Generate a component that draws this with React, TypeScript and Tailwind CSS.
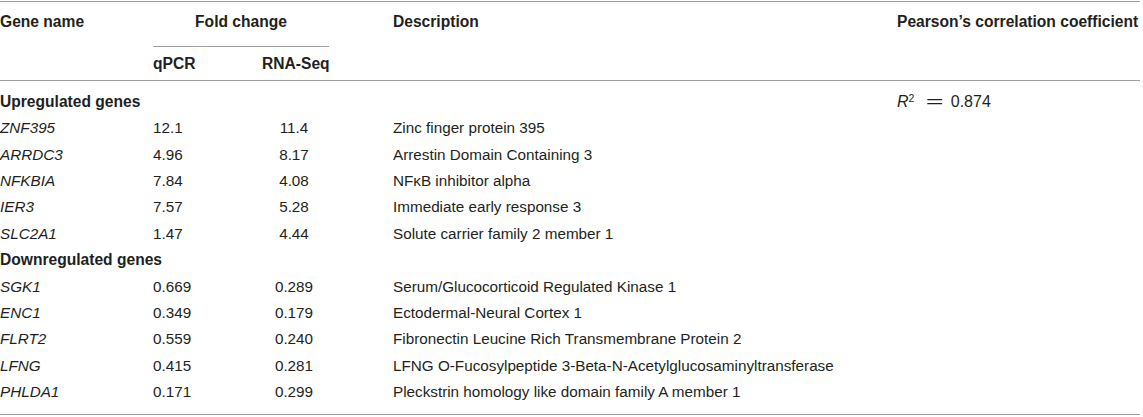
const cols = "grid grid-cols-[152px_109px_132px_504px_243px]";

type Row = { gene: string; qpcr: string; rna: string; desc: string };

const upregulated: Row[] = [
  { gene: "ZNF395", qpcr: "12.1", rna: "11.4", desc: "Zinc finger protein 395" },
  { gene: "ARRDC3", qpcr: "4.96", rna: "8.17", desc: "Arrestin Domain Containing 3" },
  { gene: "NFKBIA", qpcr: "7.84", rna: "4.08", desc: "NFκB inhibitor alpha" },
  { gene: "IER3", qpcr: "7.57", rna: "5.28", desc: "Immediate early response 3" },
  { gene: "SLC2A1", qpcr: "1.47", rna: "4.44", desc: "Solute carrier family 2 member 1" },
];

const downregulated: Row[] = [
  { gene: "SGK1", qpcr: "0.669", rna: "0.289", desc: "Serum/Glucocorticoid Regulated Kinase 1" },
  { gene: "ENC1", qpcr: "0.349", rna: "0.179", desc: "Ectodermal-Neural Cortex 1" },
  { gene: "FLRT2", qpcr: "0.559", rna: "0.240", desc: "Fibronectin Leucine Rich Transmembrane Protein 2" },
  { gene: "LFNG", qpcr: "0.415", rna: "0.281", desc: "LFNG O-Fucosylpeptide 3-Beta-N-Acetylglucosaminyltransferase" },
  { gene: "PHLDA1", qpcr: "0.171", rna: "0.299", desc: "Pleckstrin homology like domain family A member 1" },
];

function GeneRow({ row }: { row: Row }) {
  return (
    <div className={`${cols} h-[26.36px] leading-[26.36px] text-[15.25px]`}>
      <div className="italic">{row.gene}</div>
      <div className="pl-[1px]">{row.qpcr}</div>
      <div>
        <div className="ml-[13px] w-[40px] text-center">{row.rna}</div>
      </div>
      <div className="whitespace-nowrap">{row.desc}</div>
      <div />
    </div>
  );
}

function SectionRow({ title, extra }: { title: string; extra?: boolean }) {
  return (
    <div className={`${cols} h-[26.36px] leading-[26.36px]`}>
      <div className="col-span-4 font-bold text-[15.6px] whitespace-nowrap">{title}</div>
      <div className="text-[16px] whitespace-nowrap">
        {extra && (
          <>
            <span className="italic">R</span>
            <sup className="text-[10.5px]">2</sup>
            <span className="inline-block ml-[16px] mr-[11px] scale-x-[1.9]">=</span>
            <span>0.874</span>
          </>
        )}
      </div>
    </div>
  );
}

export default function App() {
  return (
    <div className="w-[1143px] h-[417px] bg-white text-[#231f20] font-['Liberation_Sans',Arial,sans-serif]">
      <div className="w-[1140px] pt-[1px]">
        <div className="h-px bg-[#9e9e9e]" />

        {/* Header */}
        <div className={`${cols} font-bold text-[15.6px] leading-[20px]`}>
          <div className="h-[45px] pt-[10px]">Gene name</div>
          <div className="col-span-2">
            <div className="ml-[1px] w-[176px] h-[45px] pt-[10px] text-center border-b border-[#9e9e9e]">
              Fold change
            </div>
          </div>
          <div className="pt-[10px]">Description</div>
          <div className="pt-[10px] whitespace-nowrap">Pearson’s correlation coefficient</div>

          <div className="h-[33px]" />
          <div className="pt-[7px] pl-[1px]">qPCR</div>
          <div className="pt-[7px] pl-[1px]">RNA-Seq</div>
          <div />
          <div />
        </div>

        <div className="h-px bg-[#9e9e9e]" />

        {/* Body */}
        <div className="pt-[8px] pb-[9px]">
          <SectionRow title="Upregulated genes" extra />
          {upregulated.map((r) => (
            <GeneRow key={r.gene} row={r} />
          ))}
          <SectionRow title="Downregulated genes" />
          {downregulated.map((r) => (
            <GeneRow key={r.gene} row={r} />
          ))}
        </div>

        <div className="h-px bg-[#9e9e9e]" />
      </div>
    </div>
  );
}
